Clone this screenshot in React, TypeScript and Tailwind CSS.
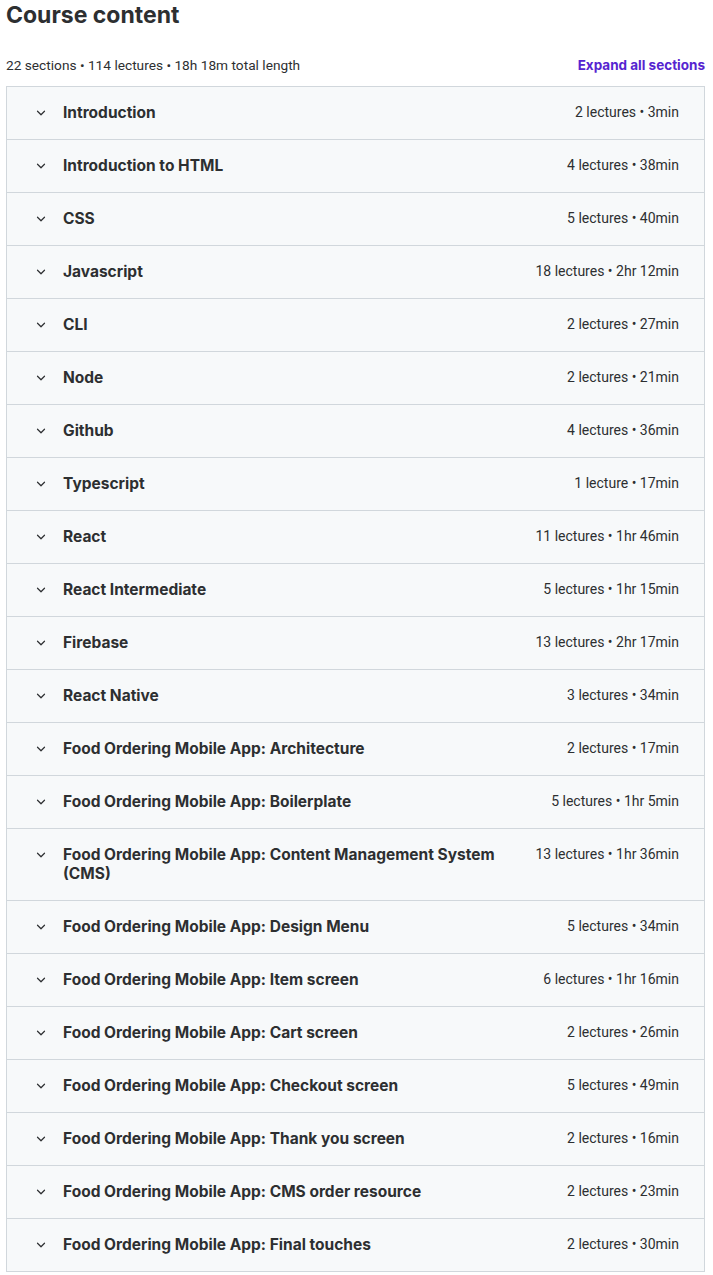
import { ChevronDown } from 'lucide-react';

type Section = { title: string; meta: string };

const sections: Section[] = [
  { title: 'Introduction', meta: '2 lectures • 3min' },
  { title: 'Introduction to HTML', meta: '4 lectures • 38min' },
  { title: 'CSS', meta: '5 lectures • 40min' },
  { title: 'Javascript', meta: '18 lectures • 2hr 12min' },
  { title: 'CLI', meta: '2 lectures • 27min' },
  { title: 'Node', meta: '2 lectures • 21min' },
  { title: 'Github', meta: '4 lectures • 36min' },
  { title: 'Typescript', meta: '1 lecture • 17min' },
  { title: 'React', meta: '11 lectures • 1hr 46min' },
  { title: 'React Intermediate', meta: '5 lectures • 1hr 15min' },
  { title: 'Firebase', meta: '13 lectures • 2hr 17min' },
  { title: 'React Native', meta: '3 lectures • 34min' },
  { title: 'Food Ordering Mobile App: Architecture', meta: '2 lectures • 17min' },
  { title: 'Food Ordering Mobile App: Boilerplate', meta: '5 lectures • 1hr 5min' },
  { title: 'Food Ordering Mobile App: Content Management System (CMS)', meta: '13 lectures • 1hr 36min' },
  { title: 'Food Ordering Mobile App: Design Menu', meta: '5 lectures • 34min' },
  { title: 'Food Ordering Mobile App: Item screen', meta: '6 lectures • 1hr 16min' },
  { title: 'Food Ordering Mobile App: Cart screen', meta: '2 lectures • 26min' },
  { title: 'Food Ordering Mobile App: Checkout screen', meta: '5 lectures • 49min' },
  { title: 'Food Ordering Mobile App: Thank you screen', meta: '2 lectures • 16min' },
  { title: 'Food Ordering Mobile App: CMS order resource', meta: '2 lectures • 23min' },
  { title: 'Food Ordering Mobile App: Final touches', meta: '2 lectures • 30min' },
];

const boldFont = { fontFamily: 'Inter, "Noto Sans", sans-serif' };

function SectionRow({ title, meta }: Section) {
  return (
    <div className="flex items-start bg-[#f7f9fa] border-b border-[#d1d7dc] last:border-b-0 pl-[26px] pr-[25px] pt-[16px] pb-[17px]">
      <span className="w-[16px] h-[19px] flex items-center justify-center mr-[14px] shrink-0">
        <ChevronDown size={14} strokeWidth={2.1} className="text-[#2d2f31]" />
      </span>
      <span className="flex-1 pr-[40px] text-[15.5px] leading-[19px] font-bold text-[#2d2f31]" style={boldFont}>
        {title}
      </span>
      <span className="shrink-0 text-[14px] leading-[19px] text-[#2d2f31]">{meta}</span>
    </div>
  );
}

export default function App() {
  return (
    <div className="bg-white min-h-screen pl-[6px] pr-[8px] text-[#2d2f31]" style={{ fontFamily: 'Roboto, "Noto Sans", sans-serif' }}>
      <h2 className="text-[23px] leading-[30px] font-bold" style={boldFont}>Course content</h2>
      <div className="flex items-end justify-between mt-[25px] mb-[11px]">
        <span className="text-[13.7px] leading-5">22 sections • 114 lectures • 18h 18m total length</span>
        <button className="text-[13.5px] leading-5 font-bold text-[#5624d0]" style={boldFont}>Expand all sections</button>
      </div>
      <div className="border border-[#d1d7dc]">
        {sections.map((s) => (
          <SectionRow key={s.title} {...s} />
        ))}
      </div>
    </div>
  );
}
